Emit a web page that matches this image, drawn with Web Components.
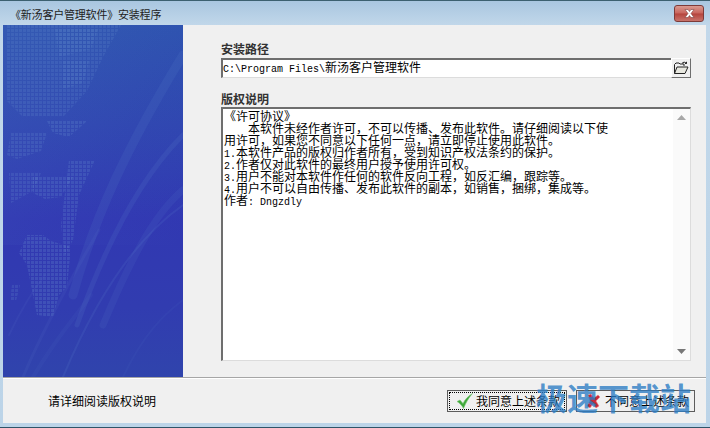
<!DOCTYPE html>
<html>
<head>
<meta charset="utf-8">
<title>安装程序</title>
<style>
    html, body { margin: 0; padding: 0; width: 710px; height: 428px; overflow: hidden; }
    body { font-family: "Noto Sans CJK SC", "Liberation Sans", sans-serif; }
</style>
</head>
<body>
<installer-window>
    <title-bar slot="title">《新汤客户管理软件》安装程序</title-bar>
    <side-art slot="side"></side-art>
    <path-field slot="main" label="安装路径" prefix="C:\Program Files\" value="新汤客户管理软件"></path-field>
    <license-box slot="main" label="版权说明"></license-box>
    <span slot="hint">请详细阅读版权说明</span>
    <action-button slot="actions" icon="ok" focused style="width:120px">我同意上述条款</action-button>
    <action-button slot="actions" icon="no" style="width:119px">不同意上述条款</action-button>
</installer-window>

<script>
class InstallerWindow extends HTMLElement {
    constructor() {
        super();
        this.attachShadow({ mode: 'open' });
        this.shadowRoot.innerHTML = `
            <style>
                :host {
                    display: block;
                    position: relative;
                    width: 710px;
                    height: 428px;
                    box-sizing: border-box;
                    padding: 0 4px 4px 3px;
                    background: linear-gradient(#a9c6e0, #c2d8ea 25px, #bcd4e8 100%);
                    border-top: 1px solid #3c6070;
                    border-bottom: 1px solid #2f5468;
                    color: #000;
                    font: 12px/14px "Noto Sans CJK SC", sans-serif;
                }
                .middle { display: flex; height: 352px; background: #f0f0f0; }
                .main { display: flex; flex-direction: column; flex: 1; padding: 17px 15px 0 38px; }
                .footer {
                    display: flex;
                    align-items: center;
                    justify-content: space-between;
                    height: 46px;
                    box-sizing: border-box;
                    padding: 0 11px 0 45px;
                    background: #f0f0f0;
                    border-top: 1px solid #a6a6a6;
                    box-shadow: inset 0 1px 0 #fff;
                }
                .actions { display: flex; gap: 9px; margin-top: 1px; }
                .mark {
                    position: absolute;
                    left: 536px;
                    top: 376px;
                    font: 700 31px/40px "Noto Sans CJK SC", sans-serif;
                    color: rgba(44, 124, 196, .8);
                    white-space: nowrap;
                    pointer-events: none;
                }
            </style>
            <slot name="title"></slot>
            <div class="middle">
                <slot name="side"></slot>
                <div class="main"><slot name="main"></slot></div>
            </div>
            <div class="footer">
                <div class="hint"><slot name="hint"></slot></div>
                <div class="actions"><slot name="actions"></slot></div>
            </div>
            <div class="mark">极速下载站</div>
        `;
    }
}

class TitleBar extends HTMLElement {
    constructor() {
        super();
        this.attachShadow({ mode: 'open' });
        this.shadowRoot.innerHTML = `
            <style>
                :host {
                    display: flex;
                    align-items: flex-start;
                    justify-content: space-between;
                    height: 24px;
                    padding: 0 2px 0 7px;
                    box-sizing: border-box;
                    color: #222;
                }
                .caption { font-size: 11px; line-height: 14px; margin-top: 6px; letter-spacing: -.2px; }
                .close {
                    display: flex;
                    align-items: center;
                    justify-content: center;
                    width: 30px;
                    height: 17px;
                    margin-top: 4px;
                    box-sizing: border-box;
                    border: 1px solid #7d3a38;
                    border-radius: 3px;
                    background: linear-gradient(#d99a90, #c9645c 48%, #b5443c 52%, #c8736b);
                }
            </style>
            <span class="caption"><slot></slot></span>
            <div class="close">
                <svg width="13" height="11" viewBox="0 0 13 11">
                    <path d="M2 1.5h3l1.5 2 1.5-2h3l-3 4 3 4H8l-1.5-2-1.5 2H2l3-4z" fill="#fff" stroke="#6d3330" stroke-width=".5"/>
                </svg>
            </div>
        `;
    }
}

class SideArt extends HTMLElement {
    constructor() {
        super();
        this.attachShadow({ mode: 'open' });
        this.shadowRoot.innerHTML = `
            <style>
                :host { display: block; width: 180px; height: 352px; flex: none; }
                svg { display: block; }
            </style>
            <svg width="180" height="352" viewBox="0 0 180 352">
                <defs>
                    <linearGradient id="bg" x1="0" y1="0" x2="0" y2="1">
                        <stop offset="0" stop-color="#2c50ae"/>
                        <stop offset=".28" stop-color="#2f45b0"/>
                        <stop offset=".55" stop-color="#3138b2"/>
                        <stop offset=".8" stop-color="#313cb0"/>
                        <stop offset="1" stop-color="#3044ac"/>
                    </linearGradient>
                    <linearGradient id="sweep" x1="0" y1="0" x2="1" y2="1">
                        <stop offset="0" stop-color="#5f8ed0" stop-opacity=".16"/>
                        <stop offset=".6" stop-color="#5f8ed0" stop-opacity=".04"/>
                        <stop offset="1" stop-color="#5f8ed0" stop-opacity="0"/>
                    </linearGradient>
                    <pattern id="dots" width="4" height="4" patternUnits="userSpaceOnUse">
                        <rect width="3" height="3" fill="#6f9ad4"/>
                    </pattern>
                </defs>
                <rect width="180" height="352" fill="url(#bg)"/>
                <rect width="180" height="220" fill="url(#sweep)"/>
                <g fill="url(#dots)">
                    <path d="M4 0H118L100 32 84 66 60 92H20L4 76Z" opacity=".17"/>
                    <path d="M8 108H44L38 126 14 134 4 130ZM6 148H38L30 166 8 178Z" opacity=".18"/>
                    <path d="M44 96H84L66 112 50 108ZM30 152H70L58 172 42 174 30 168Z" opacity=".2"/>
                    <path d="M52 4H95L88 24 56 32ZM60 36H86L80 58 60 64Z" opacity=".14"/>
                    <path d="M24 210H40L48 216 68 222 64 262 56 270 50 292 34 290 24 240 16 228Z" opacity=".22"/>
                    <path d="M9 260H17L13 276H7Z" opacity=".18"/>
                    <path d="M66 135H92L76 170 70 215 62 230 58 200Z" opacity=".2"/>
                </g>
                <g fill="none" stroke="#5e84cc" stroke-linecap="round">
                    <path d="M70 270C92 190 125 120 180 30" stroke-width="9" opacity=".14"/>
                    <path d="M74 300C106 210 140 150 180 110" stroke-width="5" opacity=".16"/>
                    <path d="M100 300C125 240 150 190 180 165" stroke-width="7" opacity=".12"/>
                    <path d="M60 352C90 280 130 215 180 180" stroke-width="2" opacity=".16"/>
                    <path d="M20 352C42 300 70 250 96 205" stroke-width="3" opacity=".1"/>
                    <path d="M6 310C18 285 30 265 42 250" stroke-width="2" opacity=".1"/>
                    <path d="M30 352C55 310 70 295 88 270" stroke-width="4" opacity=".08"/>
                    <path d="M120 352C140 310 160 290 180 275" stroke-width="2" opacity=".08"/>
                </g>
            </svg>
        `;
    }
}

// latin text in the old setup font is half the width of a hanzi
const latin = (s) => `<span class="l">${s}</span>`;
const sharedText = `
    .label { font-size: 12px; line-height: 14px; font-weight: 700; margin-bottom: 1px; color: #333; }
    .l { font: 10px/12px "Liberation Mono", monospace; }
`;

class PathField extends HTMLElement {
    constructor() {
        super();
        this.attachShadow({ mode: 'open' });
    }

    connectedCallback() {
        const label = this.getAttribute('label') || '';
        const prefix = this.getAttribute('prefix') || '';
        const value = this.getAttribute('value') || '';
        this.shadowRoot.innerHTML = `
            <style>
                :host { display: block; margin-bottom: 14px; }
                ${sharedText}
                .label { margin-bottom: 2px; }
                .field {
                    display: flex;
                    height: 20px;
                    box-sizing: border-box;
                    background: #fff;
                    border: 1px solid #dcdcdc;
                    border-top: 2px solid #6e6e6e;
                    border-left: 2px solid #6e6e6e;
                }
                .text { flex: 1; line-height: 13px; white-space: pre; font-size: 12px; }
                .browse {
                    display: flex;
                    align-items: center;
                    justify-content: center;
                    width: 20px;
                    margin: -2px -1px -1px 0;
                    box-sizing: border-box;
                    background: #f0f0f0;
                    border: 1px solid;
                    border-color: #fff #6e6e6e #6e6e6e #fff;
                }
            </style>
            <div class="label">${label}</div>
            <div class="field">
                <div class="text">${latin(prefix)}${value}</div>
                <div class="browse">
                    <svg width="16" height="14" viewBox="0 0 16 14">
                        <path d="M1.5 12.5V3.5L3 2h3l1 1h4v2" fill="none" stroke="#222"/>
                        <path d="M1.5 12.5L4 6h11l-3 6.5z" fill="#e8e8e0" stroke="#222"/>
                        <path d="M9 2.5C10 .8 12.5.8 13.5 2.5M13.5 2.5V.8M13.5 2.5H12" fill="none" stroke="#222"/>
                    </svg>
                </div>
            </div>
        `;
    }
}

class LicenseBox extends HTMLElement {
    constructor() {
        super();
        this.attachShadow({ mode: 'open' });
    }

    connectedCallback() {
        const label = this.getAttribute('label') || '';
        const lines = [
            '《许可协议》',
            latin('    ') + '本软件未经作者许可，不可以传播、发布此软件。请仔细阅读以下使',
            '用许可，如果您不同意以下任何一点，请立即停止使用此软件。',
            latin('1.') + '本软件产品的版权归作者所有，受到知识产权法条约的保护。',
            latin('2.') + '作者仅对此软件的最终用户授予使用许可权。',
            latin('3.') + '用户不能对本软件作任何的软件反向工程，如反汇编，跟踪等。',
            latin('4.') + '用户不可以自由传播、发布此软件的副本，如销售，捆绑，集成等。',
            '作者' + latin(': Dngzdly')
        ];
        this.shadowRoot.innerHTML = `
            <style>
                :host { display: block; }
                ${sharedText}
                .box {
                    display: flex;
                    height: 254px;
                    box-sizing: border-box;
                    background: #fff;
                    border: 1px solid #dcdcdc;
                    border-top: 2px solid #6e6e6e;
                    border-left: 2px solid #6e6e6e;
                }
                .text { flex: 1; padding: 1px 0 0 1px; font-size: 12px; }
                .line { height: 12px; line-height: 12px; white-space: pre; }
                .bar {
                    display: flex;
                    flex-direction: column;
                    justify-content: space-between;
                    align-items: center;
                    width: 17px;
                    padding: 6px 0;
                    box-sizing: border-box;
                    background: #fafafa;
                }
            </style>
            <div class="label">${label}</div>
            <div class="box">
                <div class="text">${lines.map((l) => `<div class="line">${l}</div>`).join('')}</div>
                <div class="bar">
                    <svg width="9" height="5" viewBox="0 0 9 5"><path d="M4.5 0L9 5H0z" fill="#a8a8a8"/></svg>
                    <svg width="9" height="5" viewBox="0 0 9 5"><path d="M0 0h9L4.5 5z" fill="#777"/></svg>
                </div>
            </div>
        `;
    }
}

class ActionButton extends HTMLElement {
    constructor() {
        super();
        this.attachShadow({ mode: 'open' });
    }

    connectedCallback() {
        const icon = this.getAttribute('icon') === 'ok'
            ? `<svg width="17" height="16" viewBox="0 0 17 16"><path d="M1 8.5L4 7l3 3.5C9 6.5 12 3 16.5 .5 12.5 5 10 9.5 7.5 15.5 6 12.5 3.5 10 1 8.5z" fill="#3fa83a" stroke="#7cc878" stroke-width=".6"/></svg>`
            : `<svg width="17" height="16" viewBox="0 0 17 16"><path d="M3 2l3-1 3 4 4-3 2 2-4 4 3 5-3 2-3-4-3 4-3-2 3-5z" fill="#c9283c" stroke="#e88" stroke-width=".5"/></svg>`;
        const focus = this.hasAttribute('focused') ? 'outline: 1px dotted #000; outline-offset: -3px;' : '';
        this.shadowRoot.innerHTML = `
            <style>
                :host {
                    display: flex;
                    align-items: center;
                    gap: 3px;
                    height: 22px;
                    box-sizing: border-box;
                    padding-left: 8px;
                    background: #f0f0f0;
                    border: 1px solid #5c5c5c;
                    font-size: 12px;
                    white-space: nowrap;
                    ${focus}
                }
                svg { flex: none; }
            </style>
            ${icon}<slot></slot>
        `;
    }
}

customElements.define('installer-window', InstallerWindow);
customElements.define('title-bar', TitleBar);
customElements.define('side-art', SideArt);
customElements.define('path-field', PathField);
customElements.define('license-box', LicenseBox);
customElements.define('action-button', ActionButton);
</script>
</body>
</html>
